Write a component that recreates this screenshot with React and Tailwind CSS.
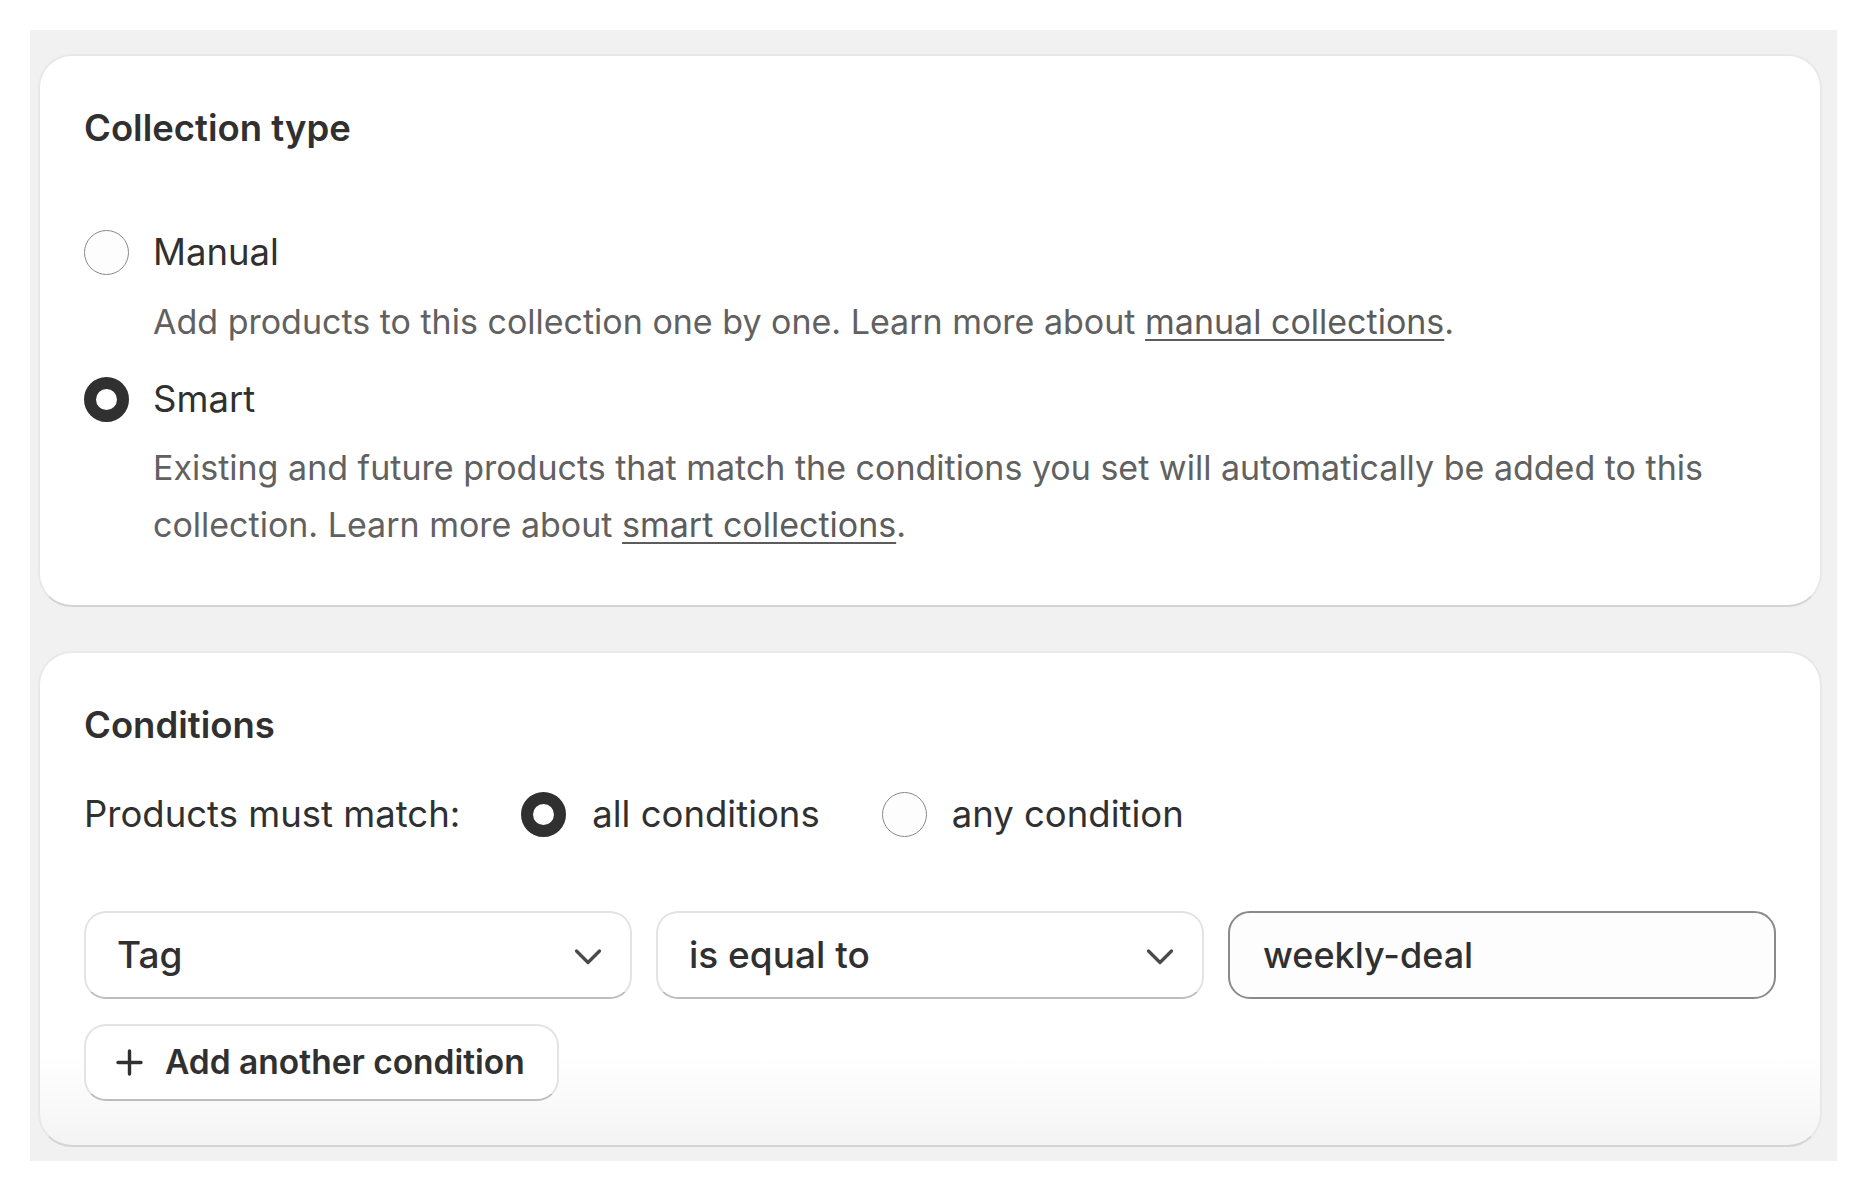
import React from "react";

function Radio({ checked }) {
  if (checked) {
    return <span className="block w-[45px] h-[45px] shrink-0 rounded-full border-[12px] border-[#303030] bg-white" />;
  }
  return <span className="block w-[45px] h-[45px] shrink-0 rounded-full border-[1.5px] border-[#8a8a8a] bg-[#fdfdfd]" />;
}

function Chevron() {
  return (
    <svg width="28" height="18" viewBox="0 0 28 18" fill="none" className="shrink-0 mt-[4px]">
      <path d="M2.5 3 L14 14.5 L25.5 3" stroke="#4a4a4a" strokeWidth="3.3" strokeLinecap="round" strokeLinejoin="round" />
    </svg>
  );
}

function Plus() {
  return (
    <svg width="27" height="27" viewBox="0 0 27 27" fill="none" className="shrink-0">
      <path d="M13.5 2 V25 M2 13.5 H25" stroke="#303030" strokeWidth="3.4" strokeLinecap="round" />
    </svg>
  );
}

function Select({ value }) {
  return (
    <div className="h-[88px] flex items-center justify-between pl-[31px] pr-[28px] rounded-[22px] border-2 border-[#e3e3e3] border-b-[#bdbdbd] bg-white">
      <span className="text-[37px] font-medium text-[#303030]">{value}</span>
      <Chevron />
    </div>
  );
}

export default function App() {
  return (
    <div className="min-h-screen bg-white p-[30px] font-[Inter,sans-serif] text-[#303030]">
      <div className="h-[1131px] bg-[#f1f1f1] pt-[24px] pb-[14px] pl-[8px] pr-[15px] flex flex-col gap-[44px]">
        {/* collection type */}
        <div className="rounded-[34px] border-2 border-[#e8e8e8] border-b-[#d4d4d4] bg-white px-[44px] pt-[44px] pb-[52px]">
          <h2 className="text-[36.5px] leading-[57px] font-semibold">Collection type</h2>

          <div className="mt-[67px] flex items-center gap-[24px] h-[57px]">
            <Radio checked={false} />
            <span className="text-[36.5px]">Manual</span>
          </div>
          <p className="mt-[12px] pl-[69px] text-[34px] leading-[57px] text-[#616161]">
            Add products to this collection one by one. Learn more about{" "}
            <a href="#" className="underline decoration-2 underline-offset-[5px] text-[#5c5c5c]">manual collections</a>.
          </p>

          <div className="mt-[21px] flex items-center gap-[24px] h-[57px]">
            <Radio checked />
            <span className="text-[36.5px]">Smart</span>
          </div>
          <p className="mt-[11px] pl-[69px] text-[34px] leading-[57px] text-[#616161]">
            Existing and future products that match the conditions you set will automatically be added to this collection. Learn more about{" "}
            <a href="#" className="underline decoration-2 underline-offset-[5px] text-[#5c5c5c]">smart collections</a>.
          </p>
        </div>

        {/* conditions */}
        <div className="rounded-[34px] border-2 border-[#e8e8e8] border-b-[#d4d4d4] bg-[linear-gradient(to_bottom,#ffffff_82%,#f4f4f4)] px-[44px] pt-[44px] pb-[44px]">
          <h2 className="text-[36.5px] leading-[57px] font-semibold">Conditions</h2>

          <div className="mt-[32px] h-[57px] flex items-center text-[36.5px]">
            <span className="mr-[61px]">Products must match:</span>
            <div className="flex items-center gap-[26px] mr-[62px]">
              <Radio checked />
              <span>all conditions</span>
            </div>
            <div className="flex items-center gap-[25px]">
              <Radio checked={false} />
              <span>any condition</span>
            </div>
          </div>

          <div className="mt-[68px] grid grid-cols-3 gap-[24px]">
            <Select value="Tag" />
            <Select value="is equal to" />
            <div className="h-[88px] flex items-center pl-[33px] rounded-[22px] border-2 border-[#8a8a8a] bg-[#fdfdfd]">
              <span className="text-[36px] font-medium text-[#303030]">weekly-deal</span>
            </div>
          </div>

          <button className="mt-[25px] h-[77px] flex items-center gap-[22px] pl-[30px] pr-[32px] rounded-[22px] border-2 border-[#e3e3e3] border-b-[#bdbdbd] bg-white">
            <Plus />
            <span className="text-[33.5px] font-semibold text-[#303030]">Add another condition</span>
          </button>
        </div>
      </div>
    </div>
  );
}
